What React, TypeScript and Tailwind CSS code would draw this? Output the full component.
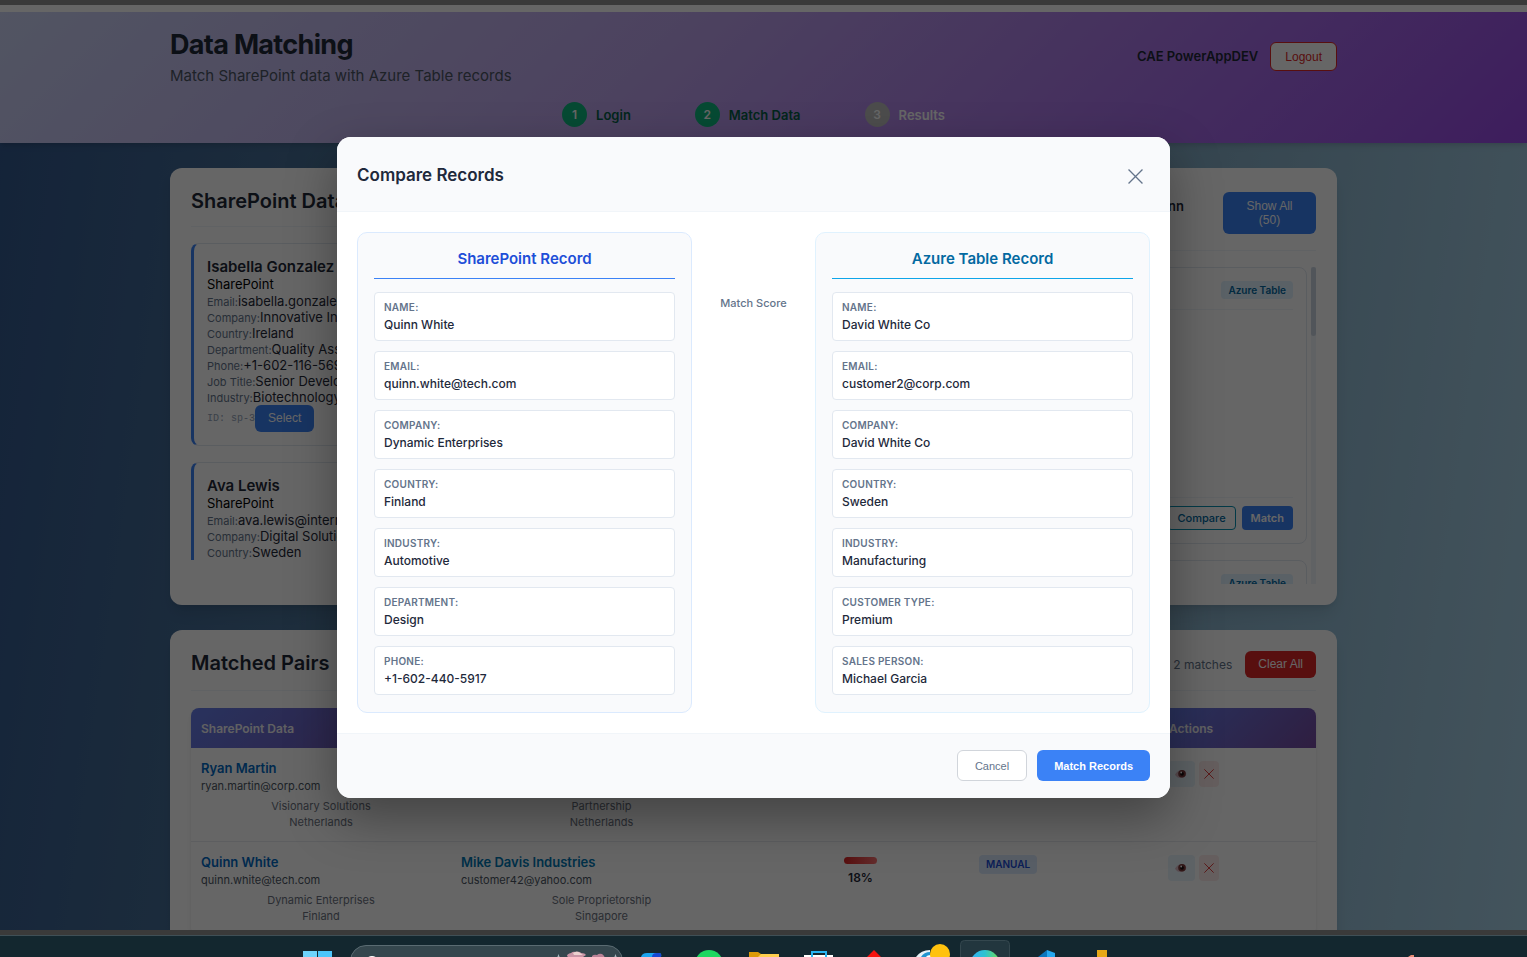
import type { ReactNode } from "react";

type Field = [label: string, value: string];

const sharePointFields: Field[] = [
  ["Name:", "Quinn White"],
  ["Email:", "quinn.white@tech.com"],
  ["Company:", "Dynamic Enterprises"],
  ["Country:", "Finland"],
  ["Industry:", "Automotive"],
  ["Department:", "Design"],
  ["Phone:", "+1-602-440-5917"],
];

const azureFields: Field[] = [
  ["Name:", "David White Co"],
  ["Email:", "customer2@corp.com"],
  ["Company:", "David White Co"],
  ["Country:", "Sweden"],
  ["Industry:", "Manufacturing"],
  ["Customer Type:", "Premium"],
  ["Sales Person:", "Michael Garcia"],
];

const people: { name: string; id?: string; rows: Field[] }[] = [
  {
    name: "Isabella Gonzalez",
    id: "ID: sp-3",
    rows: [
      ["Email:", "isabella.gonzalez"],
      ["Company:", "Innovative In"],
      ["Country:", "Ireland"],
      ["Department:", "Quality Ass"],
      ["Phone:", "+1-602-116-569"],
      ["Job Title:", "Senior Develo"],
      ["Industry:", "Biotechnology"],
    ],
  },
  {
    name: "Ava Lewis",
    rows: [
      ["Email:", "ava.lewis@intern"],
      ["Company:", "Digital Solutio"],
      ["Country:", "Sweden"],
    ],
  },
];

const ARIAL = "font-['Liberation_Sans',Arial,sans-serif]";

function Step({ n, label, done }: { n: number; label: string; done?: boolean }) {
  return (
    <li className="flex items-center gap-[9px]">
      <span
        className={`flex size-[25px] items-center justify-center rounded-full text-xs font-semibold text-white ${
          done ? "bg-[#10b981]" : "bg-[#bdbdbd]"
        }`}
      >
        {n}
      </span>
      <span className={`text-[13px] leading-4 font-semibold ${done ? "text-[#065f46]" : "text-white"}`}>{label}</span>
    </li>
  );
}

function PageHeader() {
  return (
    <header className="bg-[linear-gradient(135deg,#ccd4f6_0%,#bfa6ee_42%,#9a4ae8_100%)] pr-5 shadow-md">
      <div className="mx-auto flex h-[131px] max-w-[1167px] flex-col">
        <div className="flex items-center justify-between pt-[15px]">
          <div>
            <h1 className="text-[27px] leading-9 font-bold tracking-tight text-[#1f2937]">Data Matching</h1>
            <p className="mt-[3px] text-[15px] leading-5 text-[#4b5563]">Match SharePoint data with Azure Table records</p>
          </div>
          <div className="flex items-center gap-3">
            <span className="text-[13px] font-semibold text-[#1f2937]">CAE PowerAppDEV</span>
            <button
              type="button"
              className={`h-[29px] rounded-md border border-[#dc2626] bg-white px-[14px] text-xs text-[#dc2626] ${ARIAL}`}
            >
              Logout
            </button>
          </div>
        </div>
        <ol className="mt-4 flex justify-center gap-16">
          <Step n={1} label="Login" done />
          <Step n={2} label="Match Data" done />
          <Step n={3} label="Results" />
        </ol>
      </div>
    </header>
  );
}

function SharePointPanel() {
  return (
    <section className="min-w-0 rounded-xl bg-white px-[21px] pt-[21px] shadow-lg">
      <div className="border-b border-[#f1f5f9] pb-[13px]">
        <h2 className="text-xl leading-6 font-semibold text-[#1f2937]">SharePoint Data</h2>
      </div>
      <div className="mt-4 flex h-[317px] flex-col gap-4 overflow-hidden">
        {people.map((p) => (
          <article
            key={p.name}
            className="min-h-[203px] shrink-0 rounded-lg border border-l-[3px] border-[#e2e8f0] border-l-[#3b82f6] px-[13px] py-[13px]"
          >
            <h3 className="text-[15px] leading-[19px] font-semibold text-[#1f2937]">{p.name}</h3>
            <p className="text-[13px] leading-[17px] text-black">SharePoint</p>
            {p.rows.map(([label, value]) => (
              <p key={label} className="flex h-4 items-baseline text-[13px] leading-4 whitespace-nowrap text-[#1f2937]">
                <span className="text-[11px] leading-4 text-[#64748b]">{label}</span>
                <span>{value}</span>
              </p>
            ))}
            {p.id && (
              <div className="flex items-center">
                <span className="font-['Liberation_Mono',monospace] text-[10px] text-[#94a3b8]">{p.id}</span>
                <button type="button" className={`h-[27px] rounded-md bg-[#3b82f6] px-[13px] pb-[2px] text-xs text-white ${ARIAL}`}>
                  Select
                </button>
              </div>
            )}
          </article>
        ))}
      </div>
    </section>
  );
}

function AzureBadge() {
  return (
    <span className="rounded bg-[#e0f2fe] px-[7px] text-[10px] leading-[18px] font-semibold text-[#0369a1]">Azure Table</span>
  );
}

function AzurePanel() {
  return (
    <section className="min-w-0 rounded-xl bg-white px-[21px] pt-6 pb-[21px] shadow-lg">
      <div className="flex items-start justify-end gap-[39px] border-b border-[#f1f5f9] pb-4">
        <span className="mt-[6px] text-[13px] leading-4 font-semibold text-[#1f2937]">Quinn</span>
        <button type="button" className={`w-[93px] rounded-md bg-[#3b82f6] px-4 py-[7px] text-xs leading-[14px] text-white ${ARIAL}`}>
          Show All (50)
        </button>
      </div>
      <div className="mt-4 flex h-[317px] gap-1 overflow-hidden">
        <div className="flex flex-1 flex-col gap-4">
          <article className="flex h-[277px] shrink-0 flex-col rounded-lg border border-[#e2e8f0] p-[13px]">
            <div className="flex justify-end border-b border-[#f1f5f9] pb-[10px]">
              <AzureBadge />
            </div>
            <div className="mt-auto flex justify-end gap-[6px] border-t border-[#f1f5f9] pt-2">
              <button type="button" className="h-6 rounded border border-[#0891b2] bg-white px-[9px] text-[11px] font-medium text-[#0369a1]">
                Compare
              </button>
              <button type="button" className="h-6 rounded bg-[#3b82f6] px-[9px] text-[11px] font-semibold text-white">
                Match
              </button>
            </div>
          </article>
          <article className="flex h-[277px] shrink-0 flex-col rounded-lg border border-[#e2e8f0] p-[13px]">
            <div className="flex justify-end">
              <AzureBadge />
            </div>
          </article>
        </div>
        <div className="w-[5px] bg-[#f1f5f9]">
          <div className="h-[69px] rounded-full bg-[#cbd5e1]" />
        </div>
      </div>
    </section>
  );
}

function EyeIcon() {
  return (
    <svg viewBox="0 0 12 10" className="mr-[2px] h-[10px] w-3" aria-hidden="true">
      <path d="M0 5.500C2 2 5 .8 8 1c2 .3 3 1.800 3.300 4-.6 2.600-3 4-5.500 4S1 8 0 5.500Z" fill="#d9b9c4" />
      <circle cx="7" cy="4.800" r="3.800" fill="#7a3a3a" />
      <circle cx="7" cy="4.800" r="1.900" fill="#1c0d10" />
      <circle cx="6.200" cy="3.500" r=".9" fill="#fff" />
    </svg>
  );
}

function Cross({ className }: { className: string }) {
  return (
    <svg viewBox="0 0 14 14" className={className} fill="none" stroke="currentColor" strokeWidth="1.2" aria-hidden="true">
      <path d="M.5.5l13 13M13.500.5l-13 13" />
    </svg>
  );
}

function Party({ name, email, company, country, color }: { name: string; email: string; company: string; country: string; color: string }) {
  return (
    <td className="px-[10px] pt-3 pb-[11px] align-top">
      <div className={`h-[17px] text-[13px] leading-[17px] font-semibold ${color}`}>{name}</div>
      <div className="h-[18px] text-[11px] leading-[18px] text-[#4b5563]">{email}</div>
      <div className="mt-[3px] text-center text-[11px] leading-4 text-[#6b7280]">
        {company}
        <br />
        {country}
      </div>
    </td>
  );
}

function RowActions() {
  return (
    <td className="px-[9px] pt-[13px] align-top">
      <div className="flex gap-1">
        <button type="button" aria-label="View" className="flex h-[26px] w-[27px] items-center justify-center rounded bg-[#e8f4fd]">
          <EyeIcon />
        </button>
        <button type="button" aria-label="Remove" className="flex h-[26px] w-5 items-center justify-center rounded bg-[#fdecea] text-[#dc2626]">
          <Cross className="size-[10px]" />
        </button>
      </div>
    </td>
  );
}

function HeadCell({ width = "", children }: { width?: string; children?: ReactNode }) {
  return (
    <th className={`h-10 bg-[linear-gradient(135deg,#667eea,#764ba2)] px-[10px] pt-[2px] text-left text-xs font-semibold text-[#f1f1f4] ${width}`}>
      {children}
    </th>
  );
}

function MatchedPairs() {
  return (
    <section className="rounded-xl bg-white px-[21px] pt-[21px] pb-5 shadow-lg">
      <div className="flex items-center border-b border-[#f1f5f9] pb-3">
        <h2 className="self-start text-xl leading-[25px] font-semibold text-[#1f2937]">Matched Pairs</h2>
        <span className="ml-auto text-xs text-[#64748b]">2 matches</span>
        <button type="button" className={`ml-[13px] h-[27px] rounded-md bg-[#dc2626] px-[13px] pb-[2px] text-xs text-white ${ARIAL}`}>
          Clear All
        </button>
      </div>
      <div className="mt-[17px] overflow-hidden rounded-lg shadow-md">
        <table className="w-full table-fixed border-collapse">
          <thead>
            <tr>
              <HeadCell width="w-[260px]">SharePoint Data</HeadCell>
              <HeadCell width="w-[301px]" />
              <HeadCell width="w-[217px]" />
              <HeadCell width="w-[190px]" />
              <HeadCell>Actions</HeadCell>
            </tr>
          </thead>
          <tbody>
            <tr className="border-b border-[#e9ecef]">
              <Party name="Ryan Martin" email="ryan.martin@corp.com" company="Visionary Solutions" country="Netherlands" color="text-[#0069c4]" />
              <Party name="" email="" company="Partnership" country="Netherlands" color="text-[#0078b4]" />
              <td />
              <td />
              <RowActions />
            </tr>
            <tr>
              <Party name="Quinn White" email="quinn.white@tech.com" company="Dynamic Enterprises" country="Finland" color="text-[#0069c4]" />
              <Party name="Mike Davis Industries" email="customer42@yahoo.com" company="Sole Proprietorship" country="Singapore" color="text-[#0078b4]" />
              <td className="pt-[15px] align-top">
                <div className="flex flex-col items-center gap-[6px]">
                  <div className="h-[7px] w-[33px] rounded-full bg-[linear-gradient(90deg,#dc2626,#f87171)]" />
                  <span className="text-xs leading-4 font-semibold text-[#1f2937]">18%</span>
                </div>
              </td>
              <td className="px-[10px] pt-2 align-top">
                <span className="inline-block rounded bg-[#dbeafe] px-[7px] text-[10px] leading-[19px] font-semibold text-[#1d4ed8]">MANUAL</span>
              </td>
              <RowActions />
            </tr>
          </tbody>
        </table>
      </div>
    </section>
  );
}

function RecordCard({ title, fields, azure }: { title: string; fields: Field[]; azure?: boolean }) {
  return (
    <section className={`rounded-[10px] border bg-[#f9fafc] px-4 pt-4 pb-[17px] ${azure ? "border-[#e0f2fe]" : "border-[#dbeafe]"}`}>
      <h3
        className={`mb-[13px] border-b pb-[10px] text-center text-[15px] leading-[19px] font-semibold ${
          azure ? "border-[#0ea5e9] text-[#0369a1]" : "border-[#3b82f6] text-[#1d4ed8]"
        }`}
      >
        {title}
      </h3>
      <dl className="flex flex-col gap-[10px]">
        {fields.map(([label, value]) => (
          <div key={label} className="rounded border border-[#e2e8f0] bg-white px-[9px] pt-2 pb-[7px]">
            <dt className="text-[10px] leading-[13px] font-semibold tracking-wide text-[#64748b] uppercase">{label}</dt>
            <dd className="mt-[3px] text-xs leading-4 font-medium text-[#1e293b]">{value}</dd>
          </div>
        ))}
      </dl>
    </section>
  );
}

function CompareDialog() {
  return (
    <div className="absolute inset-0 flex items-center justify-center bg-black/60 pr-5">
      <div
        role="dialog"
        aria-modal="true"
        aria-labelledby="compare-title"
        className="w-full max-w-[833px] overflow-hidden rounded-[14px] bg-white shadow-[0_20px_50px_rgba(0,0,0,0.35)]"
      >
        <div className="flex items-end justify-between border-b border-[#f1f5f9] bg-[#f9fafc] px-5 pt-[23px] pb-[21px]">
          <h2 id="compare-title" className="text-[17px] leading-[30px] font-semibold text-[#1e293b]">
            Compare Records
          </h2>
          <button type="button" aria-label="Close" className="flex h-7 w-[30px] items-center justify-center text-[#64748b]">
            <Cross className="size-[15px]" />
          </button>
        </div>
        <div className="grid grid-cols-[1fr_auto_1fr] gap-5 p-5">
          <RecordCard title="SharePoint Record" fields={sharePointFields} />
          <div className="w-[83px] pt-16 text-center text-[11px] leading-[14px] font-medium text-[#64748b]">Match Score</div>
          <RecordCard title="Azure Table Record" fields={azureFields} azure />
        </div>
        <div className="flex justify-end gap-[10px] border-t border-[#f1f5f9] bg-[#f9fafc] px-5 pt-4 pb-[17px]">
          <button type="button" className={`h-[31px] rounded-md border border-[#d1d5db] bg-white px-[17px] pt-px text-[11px] text-[#64748b] ${ARIAL}`}>
            Cancel
          </button>
          <button type="button" className={`h-[31px] rounded-md bg-[#3b82f6] px-[17px] pt-px text-[11px] font-bold text-white ${ARIAL}`}>
            Match Records
          </button>
        </div>
      </div>
    </div>
  );
}

function TaskIcon({ children }: { children: ReactNode }) {
  return (
    <svg viewBox="0 0 56 21" className="h-[21px] w-14 shrink-0" aria-hidden="true">
      {children}
    </svg>
  );
}

function Taskbar() {
  return (
    <div className="flex h-[21px] shrink-0 overflow-hidden bg-[#13272f] pl-[303px]">
      <svg viewBox="0 0 29 21" className="h-[21px] w-[29px] shrink-0" aria-hidden="true">
        <path d="M0 15h14v6H0z" fill="#6fd3fb" />
        <path d="M15 15h14v6H15z" fill="#4cc6fb" />
      </svg>
      <div className="mt-[9px] mr-px ml-[18px] flex h-8 w-[273px] shrink-0 justify-between rounded-full border border-[#5a6b72] bg-[#35474e] pl-[14px]">
        <svg viewBox="0 0 14 12" className="h-3 w-[14px]" aria-hidden="true">
          <circle cx="7" cy="17" r="6" fill="none" stroke="#fff" strokeWidth="2" />
        </svg>
        <svg viewBox="0 0 68 12" className="h-3 w-[68px]" aria-hidden="true">
          <path d="M4.500 8l1.500 4H3zM61.500 8l1.500 4H60z" fill="#a8b8bf" />
          <path d="M13 10q0-2 4-3 2-2 5-1 4-1 5 1 4 0 5 2l-3 2H14z" fill="#c995a6" />
          <path d="M19 7q4-3 7 0l3 2h-9z" fill="#ecd0cf" />
          <path d="M38 10q2-2 5-1 2-2 5-1 2 1 3 4H38z" fill="#b98296" />
          <path d="M28 11h9v1h-9z" fill="#637a90" />
        </svg>
      </div>
      <TaskIcon>
        <path d="M17 21q1-4 6-4h12q3 0 2 4z" fill="#1ba4f0" />
        <path d="M28 21q0-4 5-4h2q3 0 2 4z" fill="#1747d1" />
      </TaskIcon>
      <TaskIcon>
        <circle cx="29" cy="28" r="14" fill="#1ed760" />
      </TaskIcon>
      <TaskIcon>
        <path d="M13 16h9l3 2v3H13z" fill="#dc9a08" />
        <path d="M25 18h18v3H22z" fill="#ffcf4f" />
      </TaskIcon>
      <TaskIcon>
        <path d="M20 21v-5h14v5" fill="none" stroke="#27b5f2" strokeWidth="2" />
        <path d="M12 19h7v2h-7zM21 19h12v2H21zM35 19h6v2h-6z" fill="#fff" />
      </TaskIcon>
      <TaskIcon>
        <path d="M26 14l7 7H19z" fill="#f5130f" />
      </TaskIcon>
      <TaskIcon>
        <path d="M12 21q5-7 14-7v7z" fill="#e6f1f7" />
        <path d="M17 21q3-5 9-5v5z" fill="#2094cf" />
        <path d="M22 21q1-2 5-2v2z" fill="#fff" />
        <circle cx="36" cy="18" r="10" fill="#ffc20e" />
      </TaskIcon>
      <TaskIcon>
        <defs>
          <linearGradient id="wave" x1="0" x2="1">
            <stop offset="0.100" stopColor="#2fb4f0" />
            <stop offset="0.500" stopColor="#2fc3cf" />
            <stop offset="0.900" stopColor="#62d86b" />
          </linearGradient>
        </defs>
        <rect x=".5" y="4.500" width="49" height="30" rx="4" fill="#22363e" stroke="#34474e" />
        <circle cx="25" cy="29" r="15" fill="url(#wave)" />
      </TaskIcon>
      <TaskIcon>
        <path d="M22 21l9-7v7z" fill="#0b76bd" />
        <path d="M31 14l8 3v4h-8z" fill="#25a7ef" />
      </TaskIcon>
      <TaskIcon>
        <path d="M25 14h10v7H25z" fill="#e6a817" />
      </TaskIcon>
      <svg viewBox="0 0 8 21" className="mr-[112px] ml-auto h-[21px] w-2 shrink-0" aria-hidden="true">
        <path d="M1 21l3-2h3v2z" fill="#e88d76" />
      </svg>
    </div>
  );
}

export default function App() {
  return (
    <div className="flex h-screen flex-col overflow-hidden font-[Inter,sans-serif]">
      <div className="h-[5px] shrink-0 bg-[#3a3a3a]" />
      <div className="relative min-h-0 flex-1 overflow-hidden bg-[linear-gradient(98deg,#32588f_0%,#4a7298_22%,#7ea6c0_68%,#a9d2e8_100%)]">
        <div className="h-[7px] bg-white" />
        <PageHeader />
        <main className="pr-5">
          <div className="mx-auto flex max-w-[1167px] flex-col gap-[25px] pt-[25px]">
            <div className="grid grid-cols-2 gap-[25px]">
              <SharePointPanel />
              <AzurePanel />
            </div>
            <MatchedPairs />
          </div>
        </main>
        <CompareDialog />
      </div>
      <div className="h-[6px] shrink-0 border-b border-[#3f4f56] bg-[#3a3a3a]" />
      <Taskbar />
    </div>
  );
}
